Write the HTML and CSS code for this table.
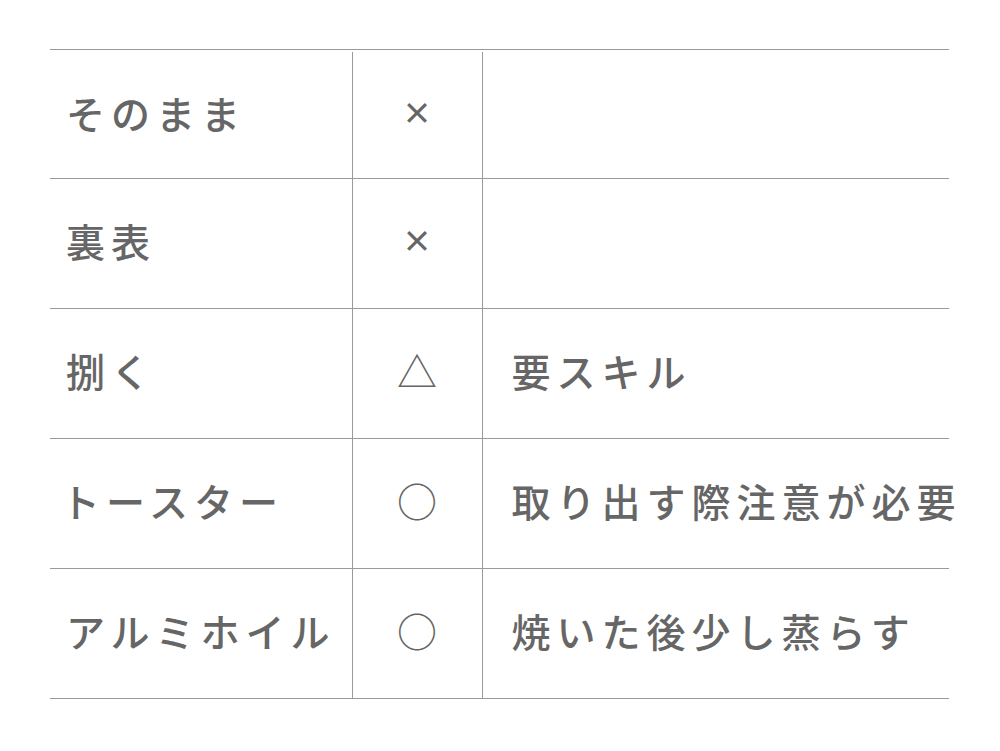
FILE: index.html
```html
<!DOCTYPE html>
<html lang="ja">
<head>
<meta charset="utf-8">
<link rel="stylesheet" href="styles.css">
</head>
<body>
<div class="wrap">
  <table class="tbl">
    <colgroup>
      <col class="c-name">
      <col class="c-mark">
      <col class="c-note">
    </colgroup>
    <tr class="first"><td class="name">そのまま</td><td class="mark mark-x">×</td><td class="note"></td></tr>
    <tr><td class="name">裏表</td><td class="mark mark-x">×</td><td class="note"></td></tr>
    <tr><td class="name">捌く</td><td class="mark">△</td><td class="note">要スキル</td></tr>
    <tr><td class="name name-tight">トースター</td><td class="mark">○</td><td class="note">取り出す際注意が必要</td></tr>
    <tr><td class="name">アルミホイル</td><td class="mark">○</td><td class="note">焼いた後少し蒸らす</td></tr>
  </table>
</div>
</body>
</html>
```
FILE: styles.css
```css
html, body {
  margin: 0;
  padding: 0;
  background: #fff;
}
body {
  font-family: "Noto Sans CJK JP", "Noto Sans", sans-serif;
  color: #666;
}
.wrap {
  margin: 49px 0 0 50px;
  width: 899px;
  border-top: 1px solid #9a9a9a;
  padding-top: 2px;
}
.tbl {
  width: 899px;
  border-collapse: collapse;
  table-layout: fixed;
}
.c-name { width: 302px; }
.c-mark { width: 130px; }
.c-note { width: 467px; }
.tbl td {
  box-sizing: border-box;
  border-bottom: 1px solid #9a9a9a;
  height: 130px;
  padding: 0 0 6px 0;
  font-size: 39px;
  font-weight: 500;
  letter-spacing: 6px;
  white-space: nowrap;
  overflow: visible;
  vertical-align: middle;
}
.tbl tr.first td {
  height: 126px;
}
.name {
  padding-left: 16px !important;
  border-right: 1px solid #9a9a9a;
}
.name-tight {
  padding-left: 11px !important;
}
.mark {
  text-align: center;
  border-right: 1px solid #9a9a9a;
  letter-spacing: 0 !important;
  font-weight: 400 !important;
  font-size: 40px !important;
}
.tbl td.mark-x {
  font-size: 30px !important;
  font-weight: 700 !important;
  padding-bottom: 8px;
}
.note {
  padding-left: 29px !important;
}
```
